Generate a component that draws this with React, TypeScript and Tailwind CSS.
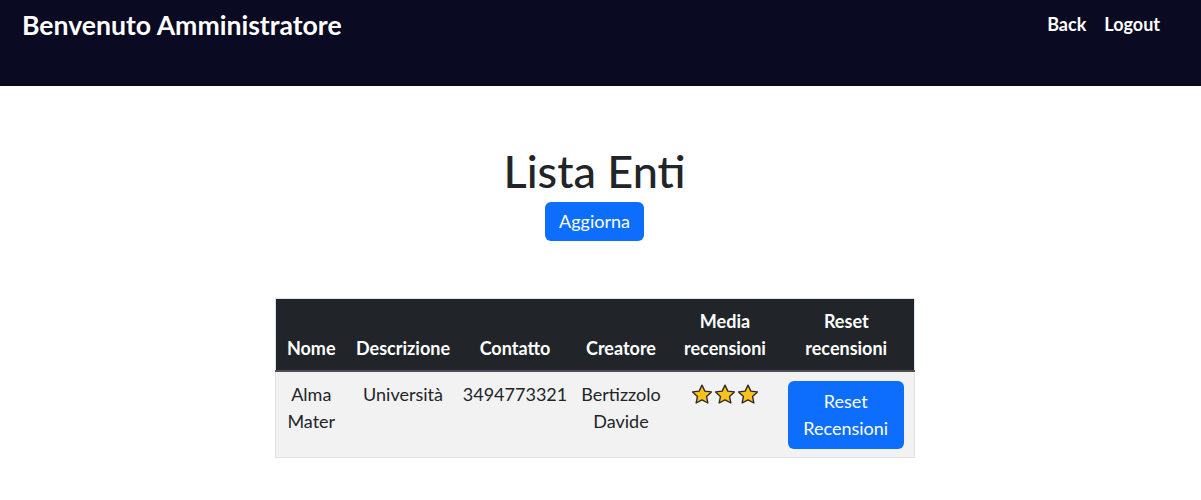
import { Fragment } from 'react';

interface Ente {
    nome: string;
    descrizione: string;
    contatto: string;
    creatore: string;
    media: number;
}

const enti: Ente[] = [
    { nome: 'Alma Mater', descrizione: 'Università', contatto: '3494773321', creatore: 'Bertizzolo Davide', media: 3 },
];

function Star() {
    return (
        <svg width="22" height="21" viewBox="0 0 24 23" className="inline-block">
            <path
                d="M12 1.2l3.1 6.6 7.2.9-5.3 5 1.4 7.1L12 17.3l-6.4 3.5L7 13.7 1.7 8.7l7.2-.9z"
                fill="#fcc21b"
                stroke="#2b2b2b"
                strokeWidth="1.5"
                strokeLinejoin="round"
            />
        </svg>
    );
}

export default function App() {
    return (
        <div className="min-h-[500px] bg-white text-[#212529] font-['Lato','Liberation_Sans',sans-serif]">
            <header className="flex h-[86px] items-start justify-between bg-[#0a0a23] pl-[22px] pr-[41px]">
                <h2 className="mt-[9px] text-[26.6px] font-bold leading-[32px] text-white">Benvenuto Amministratore</h2>
                <nav className="mt-[11px] flex gap-[18px] text-[18px] font-bold leading-[27px] text-white">
                    <a>Back</a>
                    <a>Logout</a>
                </nav>
            </header>

            <main className="flex flex-col items-center pr-3">
                <h1 className="mt-[58px] text-[45px] font-medium leading-[54px]">Lista Enti</h1>
                <button className="mt-[4px] rounded-[6px] bg-[#0d6efd] px-[14px] py-[6px] text-[18px] leading-[27px] text-white">
                    Aggiorna
                </button>

                <table className="mt-[57px] w-[639px] table-fixed border-collapse border border-[#dee2e6] text-center text-[18px] leading-[27px]">
                    <colgroup>
                        <col className="w-[72px]" />
                        <col className="w-[112px]" />
                        <col className="w-[112px]" />
                        <col className="w-[100px]" />
                        <col className="w-[108px]" />
                        <col className="w-[135px]" />
                    </colgroup>
                    <thead>
                        <tr className="bg-[#212529] align-bottom font-bold text-white">
                            <th className="border-b-2 border-[#4d5154] px-[2px] pb-[8px] pt-[9px]">Nome</th>
                            <th className="border-b-2 border-[#4d5154] px-[2px] pb-[8px] pt-[9px]">Descrizione</th>
                            <th className="border-b-2 border-[#4d5154] px-[2px] pb-[8px] pt-[9px]">Contatto</th>
                            <th className="border-b-2 border-[#4d5154] px-[2px] pb-[8px] pt-[9px]">Creatore</th>
                            <th className="border-b-2 border-[#4d5154] px-[2px] pb-[8px] pt-[9px]">Media recensioni</th>
                            <th className="border-b-2 border-[#4d5154] px-[9px] pb-[8px] pt-[9px]">Reset recensioni</th>
                        </tr>
                    </thead>
                    <tbody>
                        {enti.map((ente) => (
                            <tr key={ente.contatto} className="bg-[#f2f2f2] align-top">
                                <td className="px-[2px] pb-[8px] pt-[9px]">{ente.nome}</td>
                                <td className="px-[2px] pb-[8px] pt-[9px]">{ente.descrizione}</td>
                                <td className="px-[2px] pb-[8px] pt-[9px]">{ente.contatto}</td>
                                <td className="px-[2px] pb-[8px] pt-[9px]">{ente.creatore}</td>
                                <td className="px-[2px] py-[12px]">
                                    <div className="flex justify-center gap-[1px]">
                                        {Array.from({ length: ente.media }).map((_, i) => (
                                            <Fragment key={i}>
                                                <Star />
                                            </Fragment>
                                        ))}
                                    </div>
                                </td>
                                <td className="pb-[8px] pl-[9px] pr-[10px] pt-[9px]">
                                    <button className="w-full rounded-[6px] bg-[#0d6efd] px-[12px] py-[7px] text-[18px] leading-[27px] text-white">
                                        Reset Recensioni
                                    </button>
                                </td>
                            </tr>
                        ))}
                    </tbody>
                </table>
            </main>
        </div>
    );
}
